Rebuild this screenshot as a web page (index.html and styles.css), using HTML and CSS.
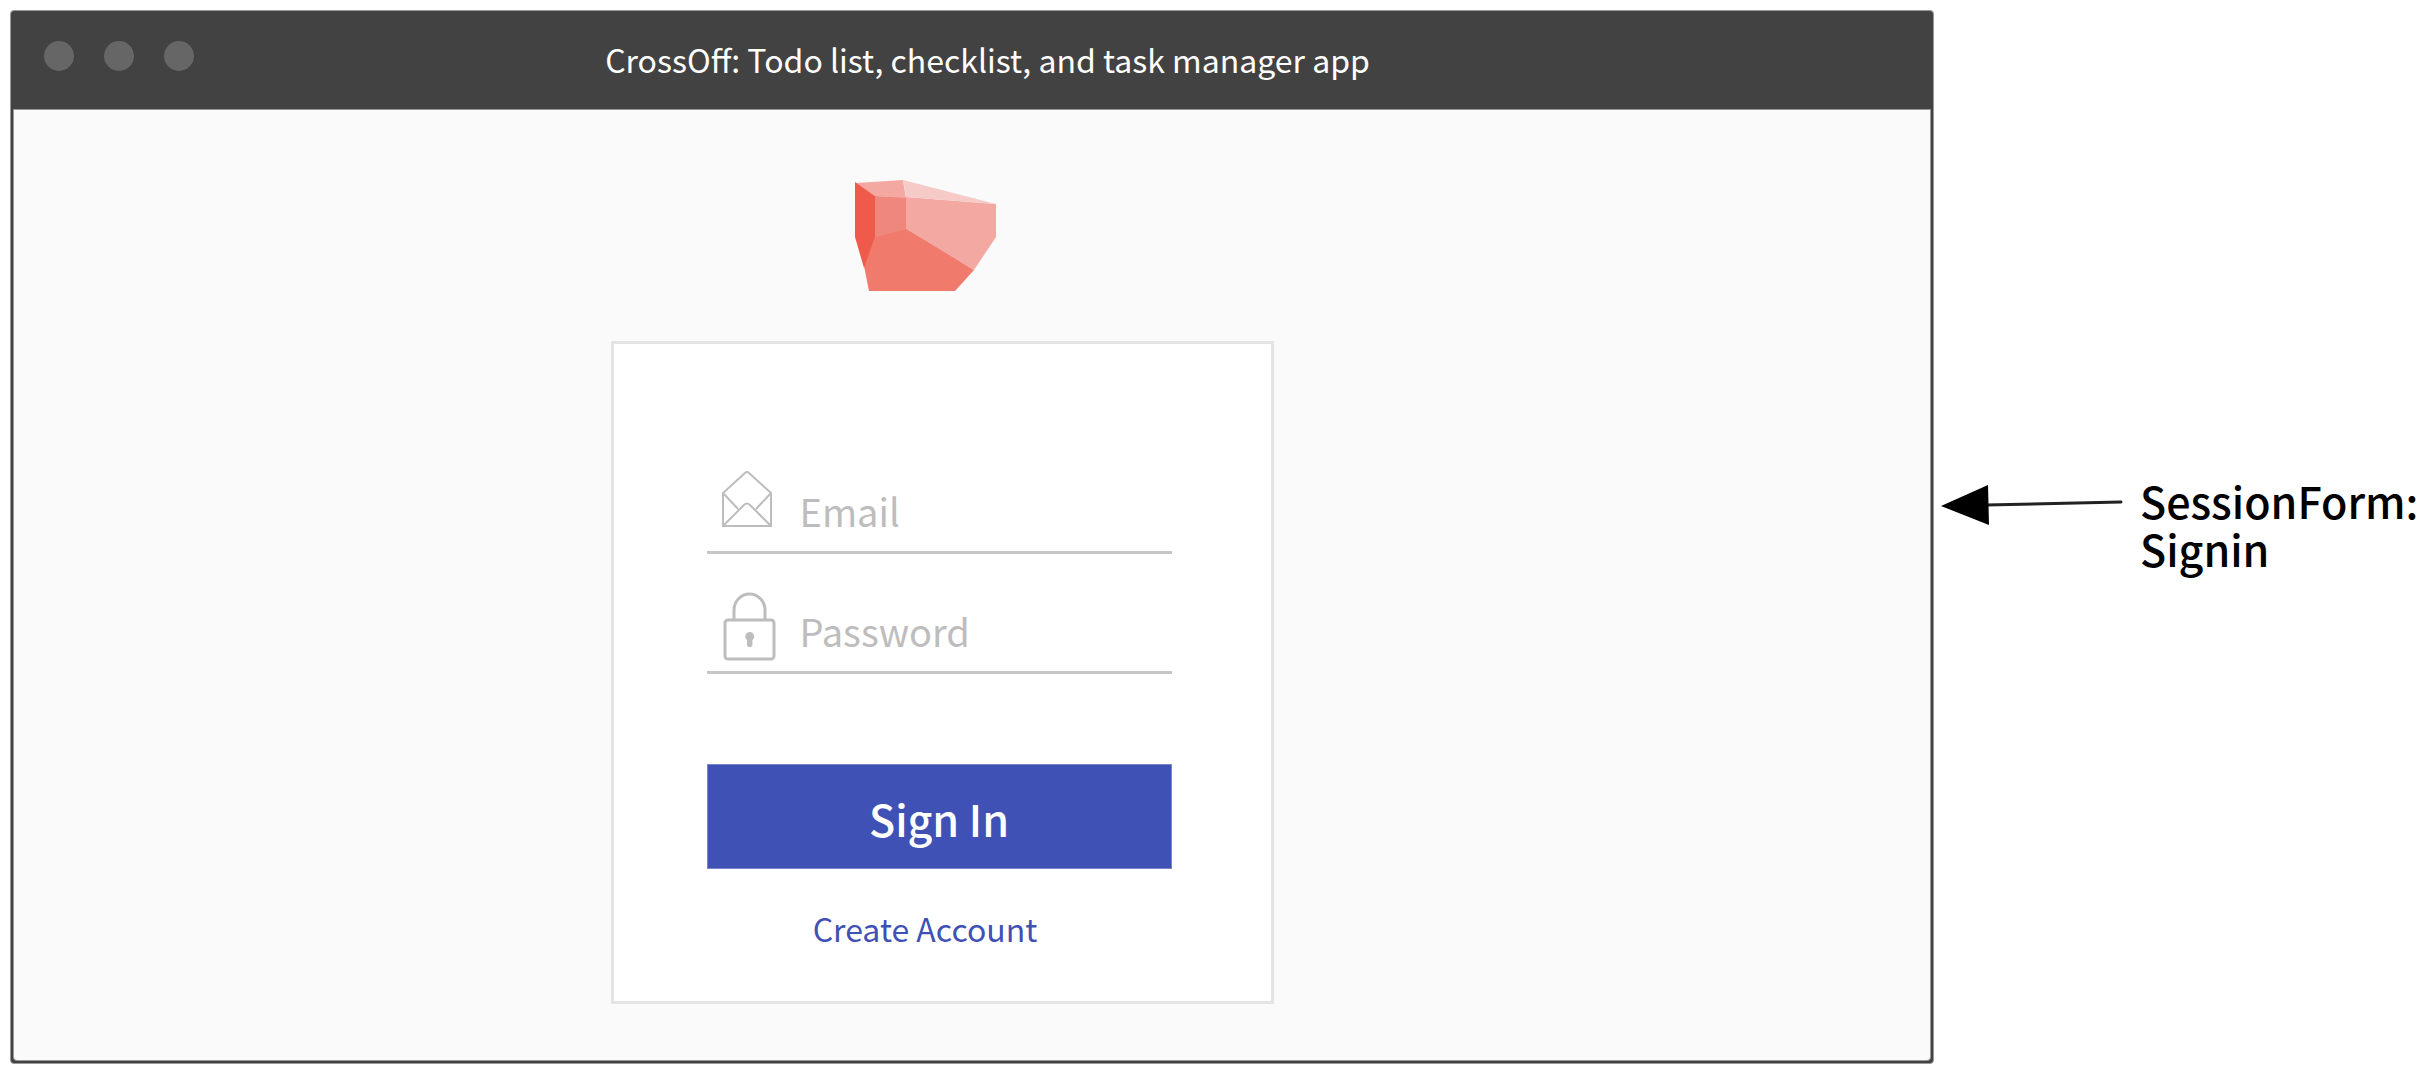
FILE: index.html
```html
<!DOCTYPE html>
<html lang="en">
<head>
<meta charset="utf-8">
<meta name="viewport" content="width=device-width, initial-scale=1">
<title>CrossOff: Todo list, checklist, and task manager app</title>
<link rel="stylesheet" href="styles.css">
</head>
<body>
<div class="board">
  <div class="window">
    <header class="titlebar">
      <div class="dots"><span class="dot"></span><span class="dot"></span><span class="dot"></span></div>
      <h1 class="title">CrossOff: Todo list, checklist, and task manager app</h1>
    </header>
    <main class="content">
      <svg class="logo" viewBox="0 0 142 112" aria-hidden="true">
        <path fill="#f07a6c" d="M20 56 52 48 119 90 100 111H14L9 86Z"/>
        <path fill="#f0877d" d="M20 16 51 17 52 49 20 57Z"/>
        <path fill="#f3a9a2" d="M1 3 48 0 51 18 20 16Z"/>
        <path fill="#f3a9a2" d="M51 17 141 24V57L119 90 51 49Z"/>
        <path fill="#f6cac6" d="M48 0 141 24 51 17Z"/>
        <path fill="#ef5a4b" d="M0 2 20 16V57L9 88 0 57Z"/>
      </svg>
      <form class="card">
        <label class="field">
          <svg class="icon" viewBox="0 0 56 72" fill="none" stroke="#bdbdbd" stroke-width="2" aria-label="Email">
            <path d="M3 23V56H51V23L29 3Q27 1 25 3L3 23L18 39M51 23L36 39M3 56L24 35Q27 32 30 35L51 56"/>
          </svg>
          <input class="input" type="email" placeholder="Email">
        </label>
        <label class="field">
          <svg class="icon" viewBox="0 0 56 72" fill="none" stroke="#bdbdbd" stroke-width="3" aria-label="Password">
            <rect x="5" y="30" width="49" height="39" rx="3"/>
            <path d="M14 30V20A15 15.500 0 0 1 45 20V30"/>
            <path fill="#bdbdbd" stroke="none" d="M29.500 42a4.500 4.500 0 0 1 3 8V54a2.500 3 0 0 1-5.500 0V50a4.500 4.500 0 0 1 2.500-8Z"/>
          </svg>
          <input class="input" type="password" placeholder="Password">
        </label>
        <button class="submit" type="button">Sign In</button>
        <a class="create" href="#">Create Account</a>
      </form>
    </main>
  </div>
  <aside class="callout">
    <svg class="arrow" viewBox="0 0 182 42" aria-hidden="true">
      <path d="M45 20 180 17" stroke="#222" stroke-width="3" stroke-linecap="round"/>
      <path d="M0 21 47 0 48 40Z"/>
    </svg>
    <p class="note">SessionForm:<br>Signin</p>
  </aside>
</div>
</body>
</html>
```

FILE: styles.css
```css
* {
  box-sizing: border-box;
}

body {
  margin: 0;
  background: #fff;
  font-family: "Noto Sans CJK SC", "Noto Sans", sans-serif;
}

.board {
  display: flex;
  align-items: center;
  padding: 10px 0 24px 10px;
}

.window {
  flex: 1;
  padding: 0 2px 2px;
  border: 1px solid #999;
  border-radius: 4px;
  background: #424242;
}

.titlebar {
  display: flex;
  align-items: flex-start;
  padding: 24px 150px 26px 31px;
}

.dots {
  display: flex;
  gap: 30px;
  padding-top: 6px;
}

.dot {
  width: 30px;
  height: 30px;
  border-radius: 50%;
  background: #666;
}

.title {
  flex: 1;
  margin: 0;
  color: #fff;
  font-size: 32px;
  font-weight: 400;
  line-height: 48px;
  text-align: center;
}

.content {
  display: flex;
  flex-direction: column;
  align-items: center;
  padding: 70px 60px 56px 0;
  border: 1px solid #999;
  border-radius: 0 0 4px 4px;
  background: #fafafa;
}

.logo {
  width: 142px;
  height: 112px;
  margin: 0 32px 49px 0;
}

.card {
  display: flex;
  flex-direction: column;
  width: 663px;
  max-width: 100%;
  padding: 90px 99px 49px 93px;
  border: 3px solid #e4e4e4;
  background: #fff;
}

.field {
  display: flex;
  gap: 24px;
  padding: 36px 0 9px 13px;
  border-bottom: 3px solid #c6c6c6;
}

.icon {
  flex: none;
  width: 56px;
  height: 72px;
}

.input {
  flex: 1;
  min-width: 0;
  padding: 10px 0 0;
  border: 0;
  outline: 0;
  background: none;
  color: #424242;
  font: 400 38px/62px "Noto Sans CJK SC", "Noto Sans", sans-serif;
}

.input::placeholder {
  color: #bdbdbd;
  opacity: 1;
}

.submit {
  margin-top: 90px;
  padding: 23px 0 20px;
  border: 1px solid #7986cb;
  background: #3f51b5;
  color: #fff;
  font: 500 43px/60px "Noto Sans CJK SC", "Noto Sans", sans-serif;
}

.create {
  align-self: center;
  margin: 35px 28px 0 0;
  color: #3f51b5;
  font-size: 32px;
  line-height: 48px;
  text-decoration: none;
}

.callout {
  display: flex;
  flex: 0 0 490px;
  gap: 17px;
  padding: 0 0 26px 7px;
}

.arrow {
  flex: none;
  width: 182px;
  height: 42px;
  margin-top: 9px;
}

.note {
  margin: 0;
  font-size: 43px;
  font-weight: 500;
  line-height: 48px;
  white-space: nowrap;
}
```
